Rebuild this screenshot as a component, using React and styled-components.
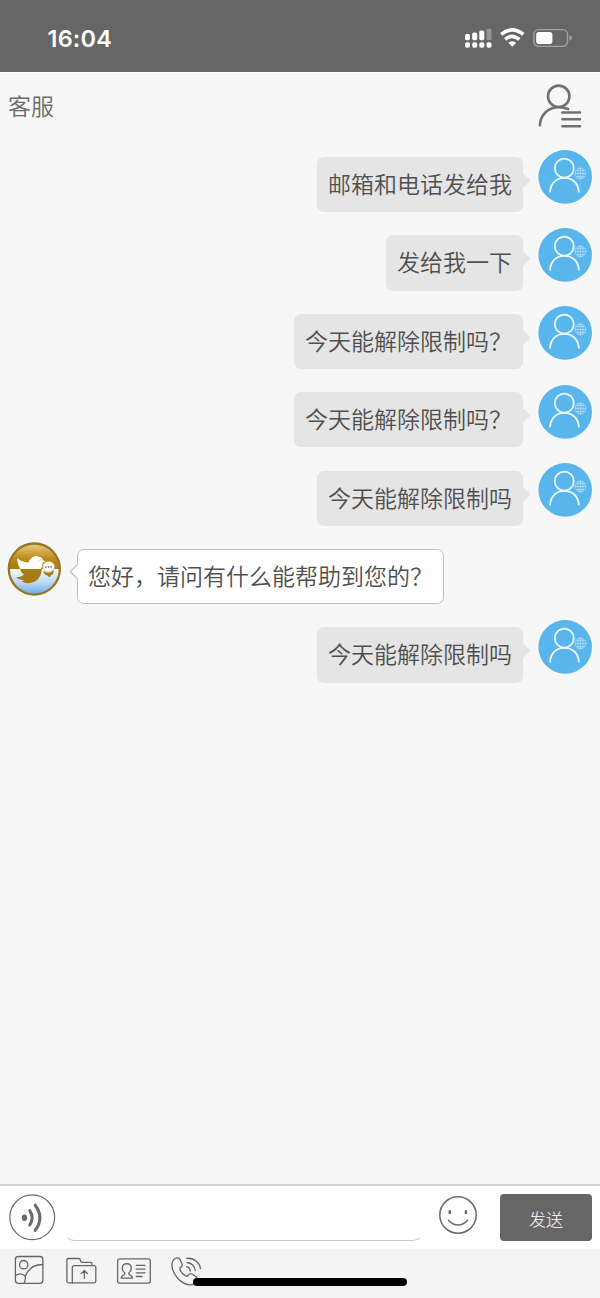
import React from "react";
import styled, { createGlobalStyle } from "styled-components";

const GlobalStyle = createGlobalStyle`
  *, *::before, *::after { box-sizing: border-box; }
  body { margin: 0; background: #f7f7f7; }
  svg { display: block; flex: none; }
  button { font: inherit; padding: 0; border: 0; background: none; color: inherit; }
`;

const Screen = styled.div`
  position: relative;
  display: flex;
  flex-direction: column;
  width: 600px;
  height: 1298px;
  overflow: hidden;
  background: #f7f7f7;
  color: #4f4f4f;
  font-family: "Noto Sans CJK SC", sans-serif;
`;

const StatusBar = styled.header`
  display: flex;
  justify-content: space-between;
  flex: none;
  height: 72px;
  background: #666;
`;

const Clock = styled.time`
  padding: 24px 0 0 47.5px;
  color: #fff;
  font: 600 23.5px/29px Inter, sans-serif;
  letter-spacing: 0.2px;
`;

const TitleBar = styled.div`
  display: flex;
  justify-content: space-between;
  flex: none;
  height: 77.5px;
  padding: 0 16px 0 8px;
  border-top: 1px solid #fff;
`;

const Title = styled.h1`
  margin: 15px 0 0;
  color: #6b6b6b;
  font-size: 23px;
  line-height: 34px;
  font-weight: 350;
`;

const ProfileButton = styled.button`
  align-self: flex-start;
  margin: 7px 1px 0 0;
`;

const Messages = styled.main`
  flex: 1;
  min-height: 0;
`;

const MessageRow = styled.div`
  display: flex;
  flex-direction: ${(p) => (p.$own ? "row-reverse" : "row")};
  align-items: flex-start;
  gap: ${(p) => (p.$own ? "15px" : "16px")};
  height: 78.43px;
  padding: 0 8px 0 7px;
`;

const Bubble = styled.div`
  position: relative;
  height: 55.3px;
  margin-top: 7.4px;
  padding: ${(p) => (p.$own ? "0 11px" : "0 10px")};
  border: ${(p) => (p.$own ? "0" : "1.5px solid #c0c0c0")};
  border-radius: 7px;
  background: ${(p) => (p.$own ? "#e5e5e5" : "#fff")};
  font-size: 23px;
  font-weight: 350;
  line-height: ${(p) => (p.$own ? "52px" : "50px")};
  white-space: nowrap;
`;

const Tail = styled.svg`
  position: absolute;
  top: ${(p) => (p.$own ? "15px" : "13px")};
  ${(p) => (p.$own ? "right: -7.5px" : "left: -9px")};
`;

const Composer = styled.footer`
  display: flex;
  align-items: flex-start;
  flex: none;
  height: 64.5px;
  padding: 8px 8px 0 9px;
  border-top: 2px solid #d2d2d2;
  background: #fff;
`;

const Input = styled.input`
  flex: none;
  width: 359px;
  height: 46.5px;
  margin: 0 16px 0 8px;
  padding: 0 12px;
  border: 1px solid transparent;
  border-bottom: 1.5px solid #c9c9c9;
  border-radius: 10px;
  background: #fff;
  outline: 0;
  font: 23px "Noto Sans CJK SC", sans-serif;
`;

const EmojiButton = styled.button`
  margin: 2px 22px 0 0;
`;

const SendButton = styled.button`
  width: 92.5px;
  height: 46.5px;
  border-radius: 4px;
  background: #666;
  color: #fff;
  font-size: 17px;
  font-weight: 300;
  line-height: 49px;
`;

const Toolbar = styled.nav`
  display: flex;
  align-items: flex-start;
  gap: 20px;
  flex: none;
  height: 49.5px;
  padding: 6px 0 0 14px;
  background: #f4f4f4;
`;

const HomeIndicator = styled.div`
  position: absolute;
  left: 193px;
  bottom: 12.5px;
  width: 214px;
  height: 8px;
  border-radius: 4px;
  background: #000;
`;

const StatusIcons = () => (
  <svg width="160" height="72" viewBox="440 0 160 72">
    <g fill="#fff">
      <rect x="465" y="34" width="5" height="6.2" rx="1.6" />
      <rect x="472.2" y="32.5" width="5" height="7.7" rx="1.6" />
      <rect x="479.3" y="30.5" width="5" height="9.7" rx="1.6" />
      <rect x="486.5" y="28.5" width="5" height="11.7" rx="1.6" opacity="0.3" />
      {[465, 472.2, 479.3, 486.5].map((x) => (
        <rect key={x} x={x} y="42.3" width="5" height="5.4" rx="1.8" />
      ))}
    </g>
    <g fill="none" stroke="#fff" strokeWidth="3.6">
      <path d="M501.2 34.4Q512.2 25.4 523.4 34.4" />
      <path d="M505.2 39.4Q512.2 33.2 519.4 39.4" />
    </g>
    <path d="M508.3 42.8Q512.2 39.6 516.2 42.8L512.2 46.8Z" fill="#fff" />
    <rect x="533.9" y="29.6" width="33.6" height="16.8" rx="4.8" fill="none" stroke="#a3a3a3" strokeWidth="1.4" />
    <rect x="536.2" y="32" width="16.2" height="12" rx="2.8" fill="#fff" />
    <path d="M569.5 35.3Q572 36.2 572 38T569.5 40.8Z" fill="#a3a3a3" />
  </svg>
);

const ProfileIcon = () => (
  <svg width="46" height="50" viewBox="537 80 46 50" fill="none" stroke="#707070" strokeWidth="2.6" strokeLinecap="round">
    <circle cx="558.7" cy="96.3" r="10.7" />
    <path d="M539.9 125.3C540.3 114.5 548.5 107.2 558.7 107.2Q563.8 107.2 568.2 109" />
    <path d="M562.4 112.5H580M562.4 119.2H580M562.4 126.3H580" />
  </svg>
);

const UserAvatar = () => (
  <svg width="54" height="54" viewBox="0 0 54 54" fill="none">
    <circle cx="27.2" cy="26.9" r="26.8" fill="#59b6ed" />
    <g stroke="#eef8fe" strokeWidth="1.8" strokeLinecap="round">
      <circle cx="26.3" cy="18.2" r="9.5" />
      <path d="M12.1 41.7C12.6 33 18.4 27.9 26.3 27.9S40.3 33 40.8 41.7" />
    </g>
    <g stroke="#a8d9f5" strokeWidth="0.9">
      <circle cx="42.4" cy="23.5" r="5.4" />
      <ellipse cx="42.4" cy="23.5" rx="2.7" ry="5.4" />
      <path d="M37 23.5H47.8M42.4 18.1V28.9M38.1 20.4H46.7M38.1 26.6H46.7" />
    </g>
  </svg>
);

const AgentAvatar = () => (
  <svg width="54" height="54" viewBox="0 -1 162 162">
    <defs>
      <linearGradient id="gold" x1="0" y1="0" x2="0" y2="1">
        <stop offset="0" stopColor="#e9d39b" />
        <stop offset="0.25" stopColor="#d9b55c" />
        <stop offset="0.6" stopColor="#bd8b1c" />
        <stop offset="1" stopColor="#ad7a08" />
      </linearGradient>
      <linearGradient id="water" x1="0" y1="0" x2="0" y2="1">
        <stop offset="0" stopColor="#f6fafe" />
        <stop offset="0.5" stopColor="#b9d8f4" />
        <stop offset="1" stopColor="#5aa5e6" />
      </linearGradient>
      <clipPath id="disc"><circle cx="82" cy="80" r="76" /></clipPath>
    </defs>
    <g clipPath="url(#disc)">
      <rect width="162" height="80" fill="url(#gold)" />
      <rect y="80" width="162" height="82" fill="url(#water)" />
      <path d="M40 80Q30 64 31 47Q41 58 64 61Q66 50 79 43Q89 39 95 43Q105 43 107 52L115 58L107 61Q106 72 102 80Z" fill="#fff" />
      <path d="M40 80H104C104 99 94 114 78 120Q60 127 43 117Q50 116 52 113Q36 114 28 105Q44 105 51 96Q40 91 40 80Z" fill="#a77c16" />
      <path d="M109 85Q124 98 141 83L138 96L132 98L129 105Q122 104 121 99Q111 98 109 85Z" fill="#a77c16" />
      <ellipse cx="125" cy="73" rx="18" ry="16" fill="#fff" stroke="#c9a84c" strokeWidth="2" />
    </g>
    <g fill="#6f541a">
      <circle cx="117" cy="74" r="2.5" />
      <circle cx="125" cy="74" r="2.5" />
      <circle cx="133" cy="74" r="2.5" />
      <circle cx="99" cy="53" r="1.6" />
    </g>
    <circle cx="82" cy="80" r="76.5" fill="none" stroke="#977524" strokeWidth="7" />
  </svg>
);

const VoiceIcon = () => (
  <svg width="47" height="47" viewBox="0 0 47 47" fill="none" stroke="#6b6b6b">
    <circle cx="23.2" cy="23.3" r="22.4" strokeWidth="1.2" />
    <ellipse cx="15.5" cy="23.7" rx="2.7" ry="3.3" fill="#6b6b6b" stroke="none" />
    <g strokeWidth="3.1" strokeLinecap="round">
      <path d="M20.8 16.6Q25.4 23.7 20.8 30.9" />
      <path d="M26.2 11.2Q35.6 23.7 26.2 36.4" />
    </g>
  </svg>
);

const EmojiIcon = () => (
  <svg width="39" height="39" viewBox="0 0 39 39" fill="none" stroke="#6b6b6b" strokeWidth="1.5" strokeLinecap="round">
    <circle cx="19" cy="19" r="18.2" />
    <path d="M9.5 24.2Q13.5 28.9 19 28.9T28.5 24.2" />
    <path d="M10.8 15.2V17M26.9 15.2V17" strokeWidth="2.5" />
  </svg>
);

const ToolIcon = styled.svg`
  fill: none;
  stroke: #666;
  stroke-width: 1.3;
  stroke-linecap: round;
  stroke-linejoin: round;
`;

const ImageIcon = () => (
  <ToolIcon width="32" height="32" viewBox="14 1255 32 32">
    <rect x="15.4" y="1256.5" width="27.5" height="26.8" rx="3" />
    <circle cx="23.7" cy="1264.7" r="4.2" />
    <path d="M15.6 1275.5Q21 1271.8 25.3 1276.3Q25.6 1279.5 24.2 1283.2M25.3 1276.3C28 1269 34 1264.6 42.7 1264.5" />
  </ToolIcon>
);

const FolderIcon = () => (
  <ToolIcon width="31" height="32" viewBox="66 1255 31 32">
    <path d="M72.5 1282.8H68.3Q66.9 1282.8 66.9 1281.3V1260Q66.9 1258.5 68.3 1258.5H78.6Q80.2 1258.5 80.4 1260.3Q80.7 1262.3 82.1 1262.3H90.3Q92 1262.3 92 1264V1265.5" />
    <path d="M72.3 1282.8V1267.5Q72.3 1265.6 74 1265.6H94Q95.8 1265.6 95.8 1267.5V1281.2Q95.8 1282.8 94 1282.8H72.3M84.3 1278.3V1270.6M81.2 1273.6L84.3 1270.5L87.5 1273.6" />
  </ToolIcon>
);

const CardIcon = () => (
  <ToolIcon width="34" height="32" viewBox="117 1255 34 32">
    <rect x="117.6" y="1258.9" width="32.7" height="24.2" rx="2" />
    <path d="M126.8 1263.6C120.8 1263.8 121.6 1271 124.7 1272.5V1274.5C122.5 1275.4 121.2 1276.1 121.2 1278.1H132.5C132.5 1276.1 131.2 1275.4 129 1274.5V1272.5C132 1271 132.8 1263.8 126.8 1263.6Z" />
    <path d="M136.3 1265.3H145M136.3 1269.2H145M136.3 1272.8H145M136.3 1276.5H142" />
  </ToolIcon>
);

const PhoneIcon = () => (
  <ToolIcon width="34" height="34" viewBox="171 1255 34 34">
    <path d="M174.2 1259.3Q178.2 1256.4 180.2 1259.8L182.2 1264.2Q182.8 1266.2 179.8 1268.2C180.3 1272.2 183.8 1275.5 187.3 1276.3Q189.5 1272.7 192.2 1274L196.2 1276.7Q198.1 1278.4 196.8 1280.5Q194.8 1285.2 189.8 1284.9C180.8 1284.2 172.5 1274.5 171.9 1265.4Q171.6 1261.3 174.2 1259.3Z" />
    <path d="M186.7 1266.6Q189.9 1267.5 190.2 1271M187 1262.5C191.5 1262.7 195 1266.2 195.2 1270.5M186.7 1258.3C194.5 1257.8 200 1263.3 200.5 1268.7" />
  </ToolIcon>
);

const messages = [
  { own: true, text: "邮箱和电话发给我" },
  { own: true, text: "发给我一下" },
  { own: true, text: "今天能解除限制吗\uFF1F" },
  { own: true, text: "今天能解除限制吗\uFF1F" },
  { own: true, text: "今天能解除限制吗" },
  { own: false, text: "您好\uFF0C请问有什么能帮助到您的\uFF1F" },
  { own: true, text: "今天能解除限制吗" },
];

const Message = ({ own, text }) => (
  <MessageRow $own={own}>
    {own ? <UserAvatar /> : <AgentAvatar />}
    <Bubble $own={own}>
      {text}
      {own ? (
        <Tail $own width="8" height="18" viewBox="0 0 8 18">
          <path d="M0 1L7.5 8.5L0 16Z" fill="#e5e5e5" />
        </Tail>
      ) : (
        <Tail width="10" height="18" viewBox="0 0 10 18">
          <path d="M9 1L1.3 8.7L9 16.5" fill="#fff" stroke="#c6c6c6" strokeWidth="1.4" />
        </Tail>
      )}
    </Bubble>
  </MessageRow>
);

export default function App() {
  return (
    <Screen>
      <GlobalStyle />
      <StatusBar>
        <Clock>16:04</Clock>
        <StatusIcons />
      </StatusBar>
      <TitleBar>
        <Title>客服</Title>
        <ProfileButton aria-label="个人资料"><ProfileIcon /></ProfileButton>
      </TitleBar>
      <Messages>
        {messages.map((message, i) => (
          <Message key={i} {...message} />
        ))}
      </Messages>
      <Composer>
        <VoiceIcon />
        <Input aria-label="消息" />
        <EmojiButton aria-label="表情"><EmojiIcon /></EmojiButton>
        <SendButton>发送</SendButton>
      </Composer>
      <Toolbar>
        <ImageIcon />
        <FolderIcon />
        <CardIcon />
        <PhoneIcon />
      </Toolbar>
      <HomeIndicator />
    </Screen>
  );
}
